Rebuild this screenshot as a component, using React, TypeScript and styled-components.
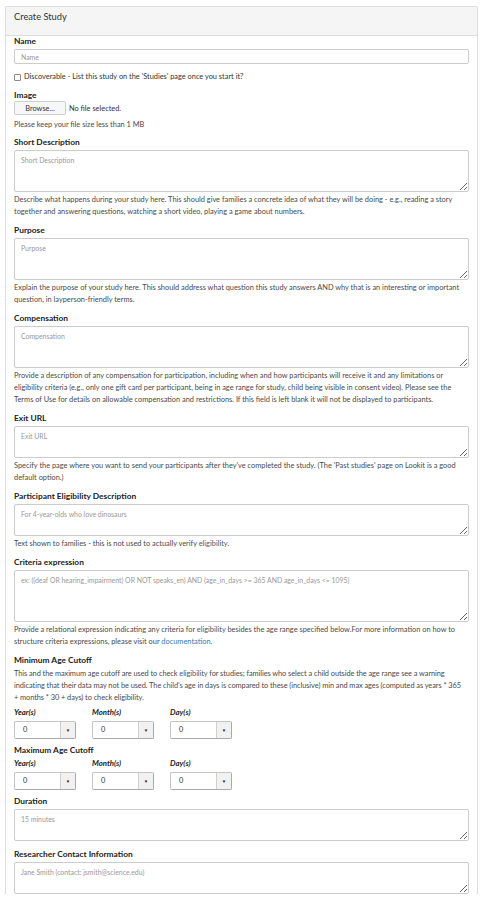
import styled, { createGlobalStyle } from "styled-components";

const GlobalStyle = createGlobalStyle`
  body {
    margin: 0;
    background: #fff;
    font-family: Lato, "Open Sans", sans-serif;
    color: #333;
  }
  * { box-sizing: border-box; }
`;

const Page = styled.div`
  padding: 6px 9px 0 5px;
`;

const Panel = styled.section`
  border: 1px solid #ddd;
  border-bottom: none;
  border-radius: 2px 2px 0 0;
`;

const Heading = styled.div`
  height: 29px;
  padding: 4px 8px 0;
  background: #f5f5f5;
  border-bottom: 1px solid #ddd;
  font-size: 9.3px;
  line-height: 11px;
  color: #333;
`;

const Body = styled.div`
  padding: 0 8px;
`;

const Group = styled.div<{ $gap?: number }>`
  margin-bottom: ${(p) => p.$gap ?? 7}px;
`;

const Label = styled.label<{ $mb?: number }>`
  display: block;
  font-size: 8.4px;
  line-height: 10px;
  font-weight: 700;
  color: #222;
  margin-bottom: ${(p) => p.$mb ?? 3}px;
`;

const TextInput = styled.input`
  display: block;
  width: 100%;
  height: 15px;
  padding: 0 6px;
  border: 1px solid #ccc;
  border-radius: 2px;
  font-family: inherit;
  font-size: 6.9px;
  color: #555;
  &::placeholder { color: #999; }
`;

const TextArea = styled.textarea<{ $h: number }>`
  display: block;
  width: 100%;
  height: ${(p) => p.$h}px;
  padding: 5px 6px;
  border: 1px solid #ccc;
  border-radius: 2px;
  font-family: inherit;
  font-size: 6.9px;
  line-height: 8px;
  color: #555;
  resize: vertical;
  &::placeholder { color: #999; }
`;

const Help = styled.p<{ $mt?: number; $tight?: boolean }>`
  margin: ${(p) => p.$mt ?? 2}px 0 0;
  font-size: 7.4px;
  line-height: 12px;
  letter-spacing: ${(p) => (p.$tight ? "-0.06px" : "normal")};
  color: #4a4a4a;
`;

const Glossary = styled.span`
  color: #3d5a78;
`;

const Link = styled.a`
  color: #337ab7;
  text-decoration: none;
`;

const CheckRow = styled.label`
  display: flex;
  align-items: center;
  gap: 3px;
  margin-top: 2px;
  font-size: 7.4px;
  line-height: 12px;
  color: #333;
`;

const Box = styled.span`
  width: 7px;
  height: 7px;
  border: 1px solid #8a8a8a;
  border-radius: 1px;
  background: #fff;
`;

const FileRow = styled.div`
  display: flex;
  align-items: center;
  gap: 3px;
  font-size: 7.4px;
  color: #333;
`;

const BrowseButton = styled.button`
  width: 52px;
  height: 14px;
  padding: 0;
  border: 1px solid #cfcfcf;
  border-radius: 2px;
  background: #f7f7f7;
  font-family: inherit;
  font-size: 7.4px;
  color: #333;
`;

const AgeRow = styled.div<{ $top: number }>`
  display: grid;
  grid-template-columns: repeat(3, 62px);
  column-gap: 16px;
  margin-top: ${(p) => p.$top}px;
`;

const AgeLabel = styled.span`
  display: block;
  font-size: 7.8px;
  line-height: 10px;
  font-weight: 700;
  font-style: italic;
  color: #222;
  margin-bottom: 4px;
`;

const Select = styled.div`
  display: flex;
  height: 18px;
  border: 1px solid #c4c4c4;
  border-right-color: #a9a9a9;
  border-bottom-color: #a9a9a9;
  border-radius: 2px;
  background: #fff;
`;

const SelectValue = styled.span`
  flex: 1;
  padding-left: 8px;
  font-size: 7.4px;
  line-height: 16px;
  color: #333;
`;

const SelectButton = styled.span`
  width: 15px;
  display: flex;
  align-items: center;
  justify-content: center;
  background: #f1f1f1;
  border-left: 1px solid #cfcfcf;
  font-size: 4.5px;
  color: #222;
`;

function AgeSelects({ top }: { top: number }) {
  return (
    <AgeRow $top={top}>
      {["Year(s)", "Month(s)", "Day(s)"].map((l) => (
        <div key={l}>
          <AgeLabel>{l}</AgeLabel>
          <Select>
            <SelectValue>0</SelectValue>
            <SelectButton>▼</SelectButton>
          </Select>
        </div>
      ))}
    </AgeRow>
  );
}

export default function App() {
  return (
    <Page>
      <GlobalStyle />
      <Panel>
        <Heading>Create Study</Heading>
        <Body>
          <Group>
            <Label>Name</Label>
            <TextInput placeholder="Name" />
          </Group>

          <Group>
            <CheckRow>
              <Box />
              Discoverable - List this study on the 'Studies' page once you start it?
            </CheckRow>
          </Group>

          <Group $gap={6}>
            <Label $mb={1}>Image</Label>
            <FileRow>
              <BrowseButton>Browse...</BrowseButton>
              No file selected.
            </FileRow>
            <Help $mt={4}>Please keep your file size less than 1 MB</Help>
          </Group>

          <Group>
            <Label>Short Description</Label>
            <TextArea $h={42} placeholder="Short Description" />
            <Help>
              Describe what happens during your study here. This should give families a concrete idea of
              what they will be doing - e.g., reading a story together and answering questions, watching a
              short video, playing a game about numbers.
            </Help>
          </Group>

          <Group>
            <Label>Purpose</Label>
            <TextArea $h={42} placeholder="Purpose" />
            <Help>
              Explain the purpose of your study here. This should address what question this study answers
              AND why that is an interesting or important question, in layperson-friendly terms.
            </Help>
          </Group>

          <Group>
            <Label>Compensation</Label>
            <TextArea $h={42} placeholder="Compensation" />
            <Help>
              Provide a description of any compensation for participation, including when and how
              participants will receive it and any limitations or eligibility criteria (e.g., only one gift
              card per participant, being in age range for study, child being visible in consent video).
              Please see the Terms of Use for details on allowable compensation and restrictions. If this
              field is left blank it will not be displayed to participants.
            </Help>
          </Group>

          <Group>
            <Label>Exit URL</Label>
            <TextArea $h={32} placeholder="Exit URL" />
            <Help>
              Specify the page where you want to send your participants after they've completed the study.
              (The 'Past studies' page on Lookit is a good default option.)
            </Help>
          </Group>

          <Group>
            <Label>Participant Eligibility Description</Label>
            <TextArea $h={32} placeholder="For 4-year-olds who love dinosaurs" />
            <Help>
              Text shown to families - this is not used to actually verify <Glossary>eligibility</Glossary>.
            </Help>
          </Group>

          <Group>
            <Label>Criteria expression</Label>
            <TextArea
              $h={52}
              placeholder="ex: ((deaf OR hearing_impairment) OR NOT speaks_en) AND (age_in_days >= 365 AND age_in_days <= 1095)"
            />
            <Help>
              Provide a relational expression indicating any criteria for <Glossary>eligibility</Glossary>{" "}
              besides the age range specified below.For more information on how to structure criteria
              expressions, please visit our <Link href="#">documentation</Link>.
            </Help>
          </Group>

          <Group $gap={6}>
            <Label>Minimum Age Cutoff</Label>
            <Help $mt={3} $tight>
              This and the maximum age cutoff are used to check <Glossary>eligibility</Glossary> for studies;
              families who select a child outside the age range see a warning indicating that their data
              may not be used. The <Glossary>child's</Glossary> age in days is compared to these (inclusive)
              min and max ages (computed as years * 365 {"+\u00a0months"} * 30 + days) to check eligibility.
            </Help>
            <AgeSelects top={3} />
          </Group>

          <Group $gap={6}>
            <Label>Maximum Age Cutoff</Label>
            <AgeSelects top={0} />
          </Group>

          <Group $gap={8}>
            <Label>Duration</Label>
            <TextArea $h={32} placeholder="15 minutes" />
          </Group>

          <Group>
            <Label>Researcher Contact Information</Label>
            <TextArea $h={32} placeholder="Jane Smith (contact: jsmith@science.edu)" />
          </Group>
        </Body>
      </Panel>
    </Page>
  );
}
